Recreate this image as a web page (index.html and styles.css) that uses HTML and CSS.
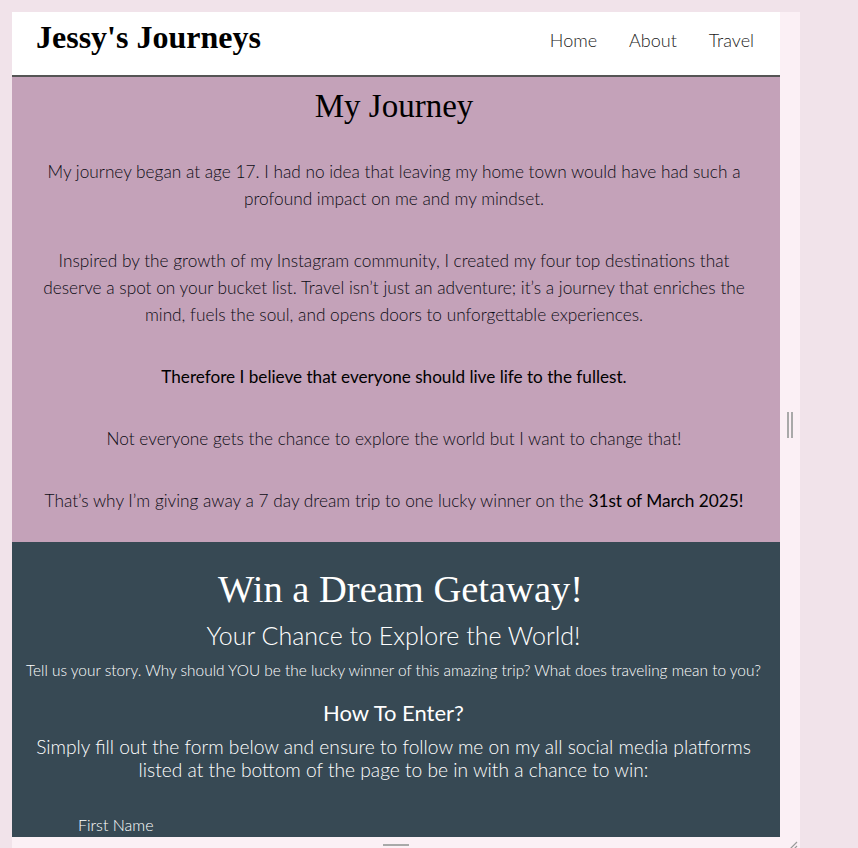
FILE: index.html
```html
<!DOCTYPE html>
<html lang="en">
<head>
<meta charset="utf-8">
<title>Jessy's Journeys</title>
<link rel="stylesheet" href="styles.css">
</head>
<body>
<div class="stage">
  <div class="frame">
    <div class="viewport">
      <header class="site-header">
        <div class="logo">Jessy's Journeys</div>
        <nav class="nav">
          <a href="#">Home</a>
          <a href="#">About</a>
          <a href="#">Travel</a>
        </nav>
      </header>
      <section class="journey">
        <h1>My Journey</h1>
        <p>My journey began at age 17. I had no idea that leaving my home town would have had such a profound impact on me and my mindset.</p>
        <p>Inspired by the growth of my Instagram community, I created my four top destinations that deserve a spot on your bucket list. Travel isn’t just an adventure; it’s a journey that enriches the mind, fuels the soul, and opens doors to unforgettable experiences.</p>
        <p class="strong">Therefore I believe that everyone should live life to the fullest.</p>
        <p>Not everyone gets the chance to explore the world but I want to change that!</p>
        <p>That’s why I’m giving away a 7 day dream trip to one lucky winner on the <strong>31st of March 2025!</strong></p>
      </section>
      <section class="contest">
        <h2>Win a Dream Getaway!</h2>
        <h3>Your Chance to Explore the World!</h3>
        <p class="story">Tell us your story. Why should YOU be the lucky winner of this amazing trip? What does traveling mean to you?</p>
        <h4>How To Enter?</h4>
        <p class="enter">Simply fill out the form below and ensure to follow me on my all social media platforms listed at the bottom of the page to be in with a chance to win:</p>
        <form class="entry-form">
          <label class="field-label">First Name</label>
        </form>
      </section>
    </div>
    <div class="vgutter"><span class="grip-v"></span></div>
  </div>
  <div class="hgutter">
    <span class="grip-h"></span>
    <svg class="corner" width="10" height="10" viewBox="0 0 10 10"><path d="M9 2 L2 9 M9 6 L6 9" stroke="#9a9a9a" stroke-width="1.2" fill="none"/></svg>
  </div>
</div>
</body>
</html>
```
FILE: styles.css
```css
html, body {
  margin: 0;
  padding: 0;
  height: 100%;
  overflow: hidden;
}
body {
  background: #f1e3ea;
  padding: 12px 0 0 12px;
  box-sizing: border-box;
}
.stage {
  width: 788px;
  background: #fbf0f5;
}
.frame {
  display: flex;
}
.viewport {
  width: 768px;
  height: 825px;
  overflow: hidden;
  background: #fff;
  font-family: Lato, "Noto Sans", sans-serif;
}
.vgutter {
  width: 20px;
  display: flex;
  align-items: center;
  justify-content: center;
}
.grip-v {
  width: 2px;
  height: 26px;
  border-left: 2px solid #a9a9a9;
  border-right: 2px solid #a9a9a9;
}
.hgutter {
  width: 768px;
  height: 20px;
  display: flex;
  justify-content: center;
  padding-top: 7px;
  box-sizing: border-box;
  position: relative;
}
.grip-h {
  width: 26px;
  height: 2px;
  background: #a9a9a9;
}
.corner {
  position: absolute;
  left: 776px;
  top: 3px;
}

.site-header {
  height: 63px;
  border-bottom: 2px solid #555;
  display: flex;
  align-items: center;
  justify-content: space-between;
  padding: 0 26px 0 24px;
}
.logo {
  font-family: "Liberation Serif", "Times New Roman", serif;
  font-weight: bold;
  font-size: 32px;
  color: #000;
  margin-top: -13px;
}
.nav {
  display: flex;
  gap: 32px;
  margin-top: -8px;
}
.nav a {
  font-weight: 300;
  font-size: 18px;
  color: #222;
  text-decoration: none;
}

.journey {
  background: #c4a2b9;
  height: 465px;
  box-sizing: border-box;
  text-align: center;
  padding: 11px 30px 0 26px;
  color: #0c0c14;
}
.journey h1 {
  font-family: "Liberation Serif", "Times New Roman", serif;
  font-weight: normal;
  font-size: 33px;
  color: #000;
  margin: 0 0 33px;
}
.journey p {
  font-weight: 300;
  font-size: 17.25px;
  line-height: 27px;
  margin: 0 0 35px;
}
.journey p.strong {
  font-weight: 400;
  font-size: 17.15px;
  color: #000;
}
.journey strong {
  font-weight: 400;
  color: #000;
}

.contest {
  background: #374954;
  color: #fff;
  text-align: center;
  height: 400px;
  padding: 24px 5px 0 0;
}
.contest h2 {
  font-family: "Liberation Serif", "Times New Roman", serif;
  font-weight: normal;
  font-size: 38.5px;
  margin: 0;
  padding-left: 14px;
  line-height: 46px;
}
.contest h3 {
  font-weight: 300;
  font-size: 25px;
  margin: 8px 0 0;
  line-height: 30px;
}
.contest .story {
  font-weight: 300;
  font-size: 15.4px;
  margin: 11px 0 0;
}
.contest h4 {
  font-weight: 400;
  font-size: 22px;
  margin: 20px 0 0;
}
.contest .enter {
  font-weight: 300;
  font-size: 19.2px;
  line-height: 23px;
  margin: 9px 20px 0;
}
.entry-form {
  text-align: left;
  padding: 34px 0 0 66px;
}
.field-label {
  font-size: 16px;
  font-weight: 300;
}
```
